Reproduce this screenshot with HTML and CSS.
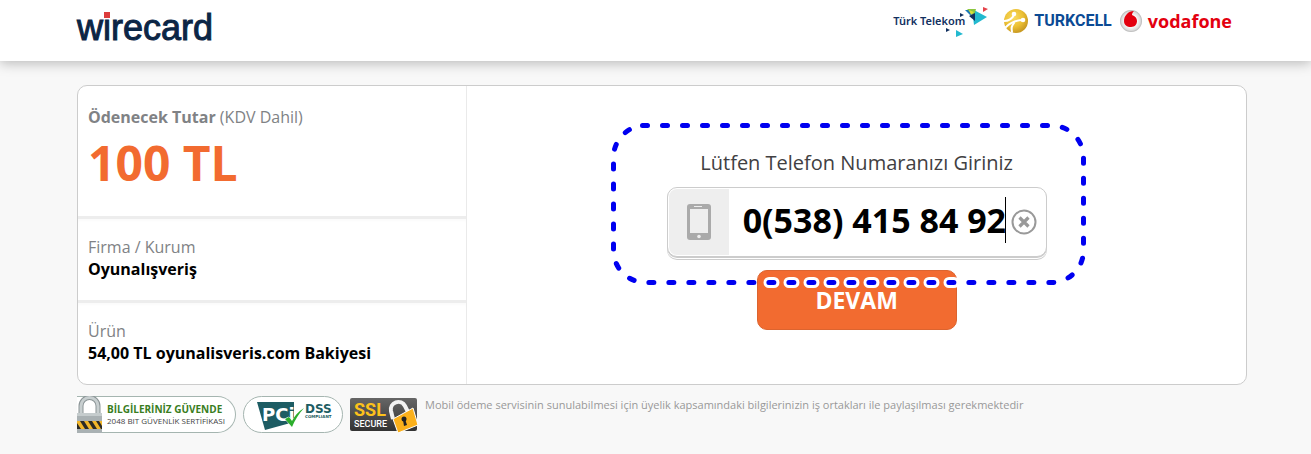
FILE: index.html
```html
<!DOCTYPE html>
<html lang="tr">
<head>
    <meta charset="utf-8">
    <title>Wirecard Mobil Ödeme</title>
    <link rel="stylesheet" href="styles.css">
</head>
<body>
    <header class="header">
        <a class="logo" href="#">wirecard</a>
        <div class="operators">
            <div class="operator telekom">
                <span>Türk Telekom</span>
                <svg width="22" height="34" viewBox="0 0 22 34">
                    <path d="M7 5l15 8-13 8z" fill="#22b9cf"/>
                    <path d="M0 6h9l-3 6z" fill="#1b78b8"/>
                    <path d="M2 5h9l-2 7z" fill="#8cc63f"/>
                    <path d="M4 6l5 2-3 3z" fill="#d9df3a"/>
                    <path d="M4 12l6-3v8z" fill="#12305f"/>
                    <path d="M-5 9l4 2-4 2z" fill="#12305f"/>
                    <path d="M18 3l5 2-5 3z" fill="#e5434a"/>
                    <path d="M-19 24l4 2-4 2z" fill="#12305f"/>
                    <path d="M-9 26l7 4-7 3z" fill="#22b9cf"/>
                </svg>
            </div>
            <div class="operator turkcell">
                <svg width="26" height="26" viewBox="0 0 26 26">
                    <defs>
                        <radialGradient id="gold" cx="40%" cy="35%" r="65%">
                            <stop offset="0" stop-color="#f8dc62"/>
                            <stop offset="0.6" stop-color="#ecc034"/>
                            <stop offset="1" stop-color="#c99a22"/>
                        </radialGradient>
                    </defs>
                    <circle cx="13" cy="13" r="12" fill="url(#gold)"/>
                    <g fill="none" stroke="#fff" stroke-width="2" stroke-linecap="round">
                        <path d="M1 13c4 0 8-2 10-6"/>
                        <path d="M3 19c4-4 9-7 17-7"/>
                        <path d="M9 24c-1-4 0-7 2-9"/>
                    </g>
                    <circle cx="11" cy="6" r="2.300" fill="#fff"/>
                    <circle cx="20" cy="12" r="2.300" fill="#fff"/>
                </svg>
                <span>TURKCELL</span>
            </div>
            <div class="operator vodafone">
                <svg width="24" height="24" viewBox="0 0 24 24">
                    <defs>
                        <radialGradient id="silver">
                            <stop offset="0.5" stop-color="#fff"/>
                            <stop offset="0.85" stop-color="#ddd"/>
                            <stop offset="1" stop-color="#b5b5b5"/>
                        </radialGradient>
                    </defs>
                    <circle cx="12" cy="12" r="11" fill="url(#silver)"/>
                    <path d="M15 2c-6 0-10 5-10 10 0 4 3 6 7 6s6-3 6-6c0-3-2-5-5-6 0-2 1-3 2-4z" fill="#e3000f"/>
                </svg>
                <span>vodafone</span>
            </div>
        </div>
    </header>

    <main class="container">
        <div class="card">
            <div class="summary">
                <div class="section">
                    <div class="label"><b>Ödenecek Tutar</b> (KDV Dahil)</div>
                    <div class="price">100 TL</div>
                </div>
                <div class="section">
                    <div class="label">Firma / Kurum</div>
                    <div class="value">Oyunalışveriş</div>
                </div>
                <div class="section">
                    <div class="label">Ürün</div>
                    <div class="value">54,00 TL oyunalisveris.com Bakiyesi</div>
                </div>
            </div>

            <form class="phone-form">
                <label for="phone">Lütfen Telefon Numaranızı Giriniz</label>
                <div class="phone-box">
                    <div class="phone-icon">
                        <svg width="24" height="36" viewBox="0 0 24 36">
                            <rect width="24" height="36" rx="3" fill="#aaa"/>
                            <rect x="3" y="5" width="18" height="24" fill="#eee"/>
                            <rect x="7" y="2" width="8" height="1" fill="#eee"/>
                            <circle cx="12" cy="32.500" r="1.800" fill="#eee"/>
                        </svg>
                    </div>
                    <input id="phone" type="tel" value="0(538) 415 84 92">
                    <span class="caret"></span>
                    <button class="clear" type="button" aria-label="Temizle">
                        <svg width="26" height="26" viewBox="0 0 26 26" fill="none" stroke="#999">
                            <circle cx="13" cy="13" r="11.500" stroke-width="2"/>
                            <path d="M8.500 8.500l9 9M17.500 8.500l-9 9" stroke-width="3.200"/>
                        </svg>
                    </button>
                </div>
                <button class="submit" type="submit">DEVAM</button>

                <!-- dashed highlight around the number field -->
                <svg class="highlight" width="476" height="164" viewBox="0 0 476 164">
                    <path class="halo" d="M158 161.500H344"/>
                    <path class="dash" d="M31.500 4.500H440.500a32 32 0 0 1 32 32V129.500a32 32 0 0 1-32 32H34.500a32 32 0 0 1-32-32V36.500a32 32 0 0 1 29-32"/>
                </svg>
            </form>
        </div>

        <footer class="footer">
            <div class="badge secure">
                <svg width="26" height="38" viewBox="0 0 26 38">
                    <path d="M4 18V10a8.500 8.500 0 0 1 17 0v8" fill="none" stroke="#8b9496" stroke-width="5"/>
                    <path d="M4 18V10a8.500 8.500 0 0 1 17 0v8" fill="none" stroke="#c8cfd0" stroke-width="3"/>
                    <rect y="17" width="25" height="21" rx="1" fill="#a9b1b3"/>
                    <rect y="17" width="25" height="3" fill="#c5cccd"/>
                    <rect y="25" width="25" height="8" fill="#2b2a26"/>
                    <path d="M0 25h3l5 8H4L0 27zM7 25h4l5 8h-4zM15 25h4l5 8h-4zM22 25h3v5z" fill="#f2b62a"/>
                </svg>
                <div class="secure-text">
                    <strong>BİLGİLERİNİZ GÜVENDE</strong>
                    <span>2048 BIT GÜVENLİK SERTİFİKASI</span>
                </div>
            </div>
            <div class="badge">
                <svg width="98" height="35" viewBox="0 0 98 35">
                    <path d="M13 5h37v20l-29 8z" fill="#1d5c63"/>
                    <text class="pci" x="18" y="24">PCi</text>
                    <path d="M41 22l4-2 3 4q4-8 12-13-8 9-12 19z" fill="#2cae2c" stroke="#fff" stroke-width="1" paint-order="stroke"/>
                    <text class="dss" x="61" y="16">DSS</text>
                    <text class="compliant" x="61" y="21">COMPLIANT</text>
                </svg>
            </div>
            <svg class="ssl" width="68" height="35" viewBox="0 0 68 35">
                <defs>
                    <linearGradient id="steel" x2="0" y2="1">
                        <stop offset="0" stop-color="#666"/>
                        <stop offset="1" stop-color="#333"/>
                    </linearGradient>
                </defs>
                <rect width="67" height="33" rx="2" fill="url(#steel)"/>
                <text class="ssl-big" x="4" y="18">SSL</text>
                <text class="ssl-small" x="4" y="29">SECURE</text>
                <path d="M43 21l-2-8a7.500 7.500 0 0 1 14-5l3 6" fill="none" stroke="#f2f2f2" stroke-width="4"/>
                <path d="M43 21l20-11 5 17-20 8z" fill="#fbb01b" stroke="#fff" stroke-width="1"/>
                <circle cx="54" cy="21" r="2.500" fill="#222"/>
                <path d="M53 22l2-1 2 6-3 1z" fill="#222"/>
            </svg>
            <p class="note">Mobil ödeme servisinin sunulabilmesi için üyelik kapsamındaki bilgilerinizin iş ortakları ile paylaşılması gerekmektedir</p>
        </footer>
    </main>
</body>
</html>
```

FILE: styles.css
```css
* {
    box-sizing: border-box;
}

body {
    margin: 0;
    font-family: 'Open Sans', 'Noto Sans', sans-serif;
    font-size: 16px;
    background-color: #f8f8f8;
}

.header {
    display: flex;
    justify-content: space-between;
    align-items: flex-start;
    height: 61px;
    padding: 0 79px 0 77px;
    background: white;
    box-shadow: 0 2px 12px rgba(0,0,0,0.27);
}

.logo {
    position: relative;
    margin-top: 8px;
    font-family: 'Liberation Sans', Arial, sans-serif;
    font-size: 36px;
    line-height: 40px;
    color: #0b2545;
    -webkit-text-stroke: 1px #0b2545;
    text-decoration: none;
}

/* red dot of the i */
.logo::after {
    content: "";
    position: absolute;
    left: 27px;
    top: 4px;
    width: 6px;
    height: 6px;
    background: #dc3c3c;
}

.operators {
    display: flex;
    gap: 7px;
    padding-top: 4px;
}

.operator {
    display: flex;
    align-items: center;
    height: 34px;
    line-height: 24px;
}

.telekom {
    margin-right: 9px;
    font-family: 'Noto Sans', sans-serif;
    font-size: 11px;
    font-weight: 600;
    color: #12305f;
}

.telekom svg {
    overflow: visible;
}

.turkcell {
    gap: 5px;
    font-family: Roboto, sans-serif;
    font-size: 16px;
    font-weight: 700;
    color: #0b4a94;
}

.vodafone {
    gap: 5px;
    font-size: 18px;
    font-weight: 700;
    color: #e3000f;
}

.container {
    padding: 24px 64px 0 77px;
}

.card {
    display: grid;
    grid-template-columns: 1fr 2fr;
    background: white;
    border: 1px solid #ccc;
    border-radius: 10px;
}

.summary {
    border-right: 1px solid #eaeaea;
}

.section {
    padding: 17px 10px 20px;
    line-height: 22px;
}

.section:first-child {
    padding: 20px 10px 18px;
}

.section + .section {
    border-top: 3px solid #ededed;
    box-shadow: inset 0 3px 3px -1px rgba(0,0,0,0.02);
}

.label {
    color: #808285;
}

.price {
    font-size: 48px;
    line-height: 70px;
    font-weight: 700;
    color: #f26b30;
}

.value {
    font-weight: 700;
    color: black;
}

.phone-form {
    position: relative;
    justify-self: center;
    width: 380px;
    padding-top: 63px;
    display: flex;
    flex-direction: column;
    align-items: center;
}

.phone-form label {
    margin-bottom: 10px;
    font-size: 20px;
    line-height: 28px;
    color: #414042;
}

.phone-box {
    display: flex;
    align-items: center;
    width: 100%;
    height: 70px;
    padding: 1px;
    border: 1px solid #ccc;
    border-radius: 10px;
    background: white;
    box-shadow: 0 1px 0 #ccc, 0 2px 0 white, 0 3px 0 #ccc;
}

.phone-icon {
    display: flex;
    align-items: center;
    justify-content: center;
    width: 60px;
    height: 100%;
    background: #eee;
    border-radius: 8px 0 0 8px;
}

.phone-box input {
    flex: 1;
    min-width: 0;
    padding: 0 0 4px 14px;
    border: 0;
    outline: 0;
    font-family: inherit;
    font-size: 34px;
    font-weight: 700;
    color: black;
    background: none;
}

.caret {
    width: 1px;
    height: 46px;
    margin-bottom: 4px;
    background: black;
}

.clear {
    display: flex;
    margin: 0 8px 0 5px;
    padding: 0;
    border: 0;
    background: none;
}

.submit {
    width: 200px;
    height: 60px;
    margin-top: 13px;
    border: 1px solid #dc642f;
    border-radius: 10px;
    background: #f26b30;
    color: white;
    font-family: inherit;
    font-size: 23px;
    font-weight: 700;
}

.highlight {
    position: absolute;
    left: -56px;
    top: 35px;
    overflow: visible;
    pointer-events: none;
}

.highlight path {
    fill: none;
    stroke-dasharray: 5 15;
    stroke-linecap: round;
}

.halo {
    stroke: white;
    stroke-width: 11px;
}

.dash {
    stroke: #0000f0;
    stroke-width: 5px;
}

.footer {
    display: flex;
    align-items: flex-start;
    gap: 7px;
    padding-top: 11px;
}

.badge {
    display: flex;
    align-items: center;
    height: 37px;
    background: white;
    border: 1px solid #a5b5b0;
    border-radius: 19px;
}

.secure {
    width: 159px;
    gap: 4px;
    border-left: 0;
    border-radius: 0 19px 19px 0;
}

.secure-text {
    display: flex;
    flex-direction: column;
    white-space: nowrap;
}

.secure-text strong {
    font-size: 10px;
    line-height: 13px;
    font-weight: 700;
    color: #3a7d1e;
}

.secure-text span {
    font-size: 8px;
    line-height: 10px;
    color: #444;
}

.pci {
    font: 700 18px 'DejaVu Sans', sans-serif;
    fill: white;
}

.dss {
    font: 700 12px 'DejaVu Sans', sans-serif;
    fill: #1d5c63;
}

.compliant {
    font: 700 4px 'DejaVu Sans', sans-serif;
    fill: #1d5c63;
}

.ssl {
    margin-top: 2px;
}

.ssl-big {
    font: 700 18px Roboto, sans-serif;
    fill: #fcc21b;
}

.ssl-small {
    font: 500 9px Roboto, sans-serif;
    fill: white;
}

.note {
    margin: 0;
    font-size: 11px;
    line-height: 18px;
    color: #999;
}
```
